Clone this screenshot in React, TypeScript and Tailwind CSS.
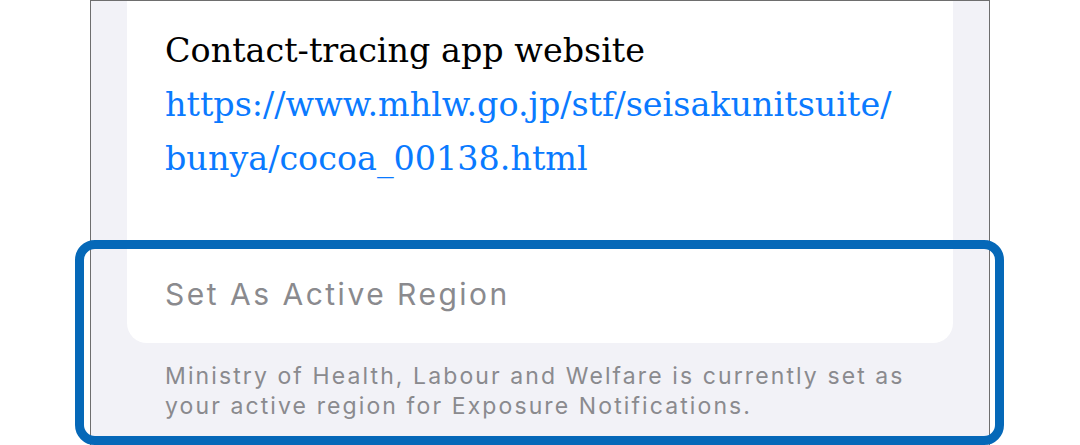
export default function App() {
  return (
    <div className="relative h-[445px] w-[1080px] overflow-hidden bg-white">
      <div className="ml-[90px] flex h-[445px] w-[900px] flex-col border-x border-t border-[#6e6e6e] bg-[#f2f2f7] px-[36px]">
        <div className="rounded-b-[20px] bg-white pl-[38px] pr-[20px]">
          <div className="pt-[23px] pb-[47px] font-['DejaVu_Serif',serif] text-[33.4px] leading-[54px]">
            <p className="text-black">Contact-tracing app website</p>
            <p className="text-[#0a7aff]">
              https://www.mhlw.go.jp/stf/seisakunitsuite/
              <br />
              bunya/cocoa_00138.html
            </p>
          </div>
          <div className="flex h-[110px] items-center pt-[12px] font-['Inter',sans-serif] text-[30px] tracking-[2.5px] text-[#8a8a8e]">
            Set As Active Region
          </div>
        </div>
        <p className="pt-[18px] pl-[38px] font-['Inter',sans-serif] text-[23px] leading-[30px] tracking-[2.1px] text-[#8a8a8e]">
          Ministry of Health, Labour and Welfare is currently set as
          <br />
          your active region for Exposure Notifications.
        </p>
      </div>
      <div className="absolute left-[75px] top-[240px] h-[205px] w-[929px] rounded-[20px] border-[9px] border-[#0568b8]" />
    </div>
  );
}
